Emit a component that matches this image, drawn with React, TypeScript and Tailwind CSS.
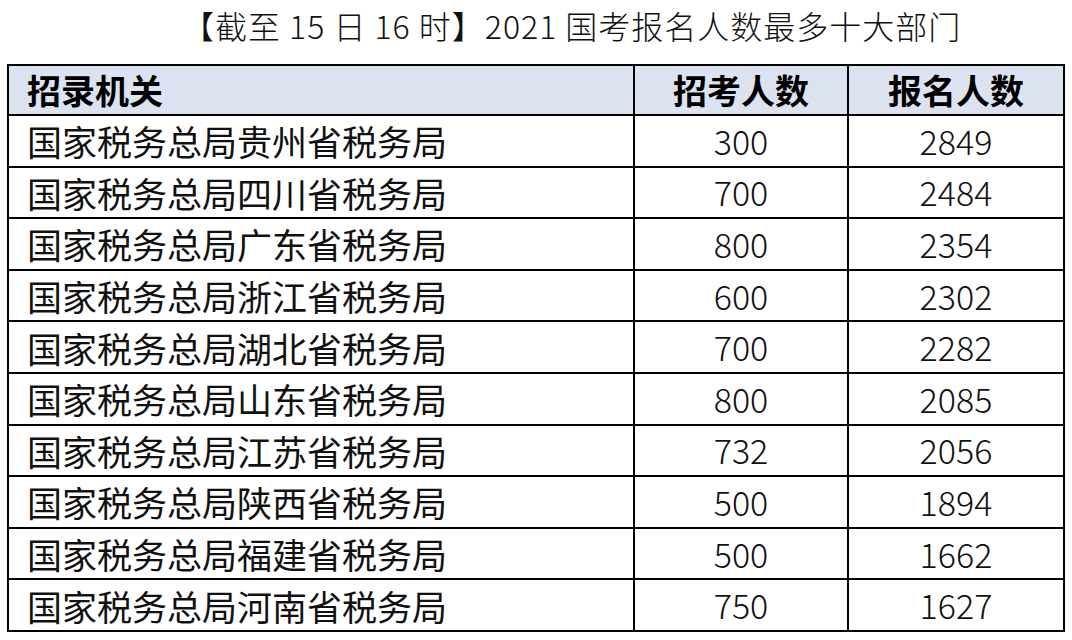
import React from "react";

const rows: [string, string, string][] = [
  ["国家税务总局贵州省税务局", "300", "2849"],
  ["国家税务总局四川省税务局", "700", "2484"],
  ["国家税务总局广东省税务局", "800", "2354"],
  ["国家税务总局浙江省税务局", "600", "2302"],
  ["国家税务总局湖北省税务局", "700", "2282"],
  ["国家税务总局山东省税务局", "800", "2085"],
  ["国家税务总局江苏省税务局", "732", "2056"],
  ["国家税务总局陕西省税务局", "500", "1894"],
  ["国家税务总局福建省税务局", "500", "1662"],
  ["国家税务总局河南省税务局", "750", "1627"],
];

const font = { fontFamily: '"Noto Sans CJK SC", "Noto Sans", sans-serif' };

export default function App() {
  return (
    <div className="w-[1072px] h-[640px] bg-white text-black" style={font}>
      <div className="h-[64px] flex items-start justify-start pt-[3px] pl-[182px] text-[32px] leading-[44px] font-light tracking-[1px] text-[#111] whitespace-pre">
        【截至 15 日 16 时】2021 国考报名人数最多十大部门
      </div>
      <div className="ml-[7px] w-[1058px] border-2 border-black">
        <div className="grid grid-cols-[626px_214px_214px] h-[48px] bg-[#dbe3f1] text-[34px] font-bold leading-none">
          <div className="flex items-center pl-[18px] border-r-2 border-black">招录机关</div>
          <div className="flex items-center justify-center border-r-2 border-black">招考人数</div>
          <div className="flex items-center justify-center">报名人数</div>
        </div>
        {rows.map((r) => (
          <div
            key={r[0]}
            className="grid grid-cols-[626px_214px_214px] h-[51.6px] border-t-2 border-black leading-none text-[#111]"
          >
            <div className="flex items-center pl-[18px] border-r-2 border-black text-[35px]">{r[0]}</div>
            <div className="flex items-center justify-center border-r-2 border-black font-light text-[34px]">{r[1]}</div>
            <div className="flex items-center justify-center font-light text-[34px]">{r[2]}</div>
          </div>
        ))}
      </div>
    </div>
  );
}
